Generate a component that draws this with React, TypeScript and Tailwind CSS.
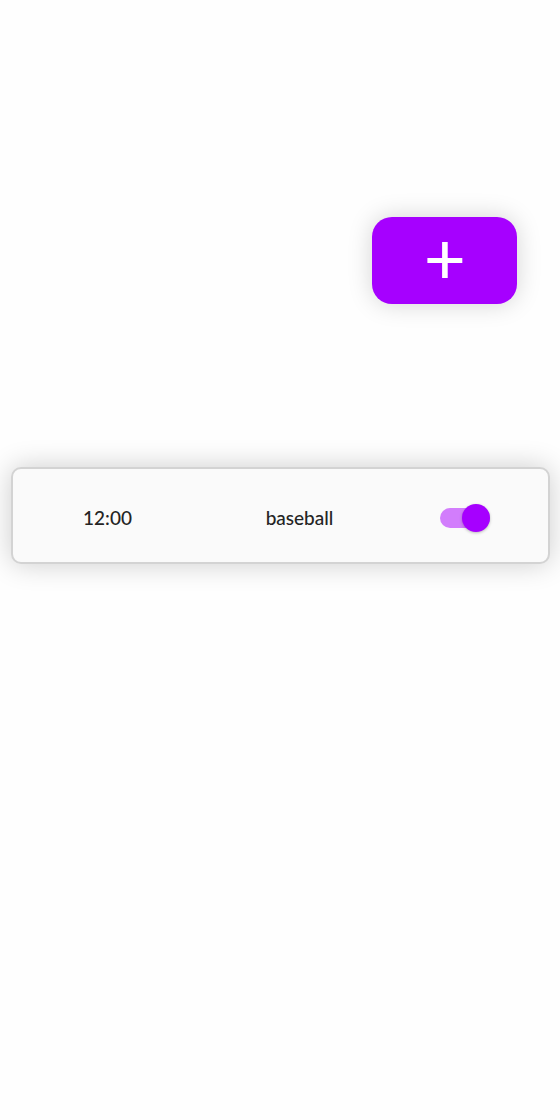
import { useState } from "react";

type Alarm = { id: string; time: string; name: string; enabled: boolean };

function AddButton() {
  return (
    <button
      type="button"
      aria-label="Add alarm"
      className="flex h-[87px] w-[145px] items-center justify-center rounded-[20px] bg-[#a600ff] pb-0.5 shadow-[0_0_24px_rgba(0,0,0,0.17)]"
    >
      <svg width="36" height="36" viewBox="0 0 36 36" fill="#ffffff" aria-hidden="true">
        <path d="M15.1 0h5.6v16h14.6v4.9H20.7V36h-5.6V20.9H.4V16h14.7z" />
      </svg>
    </button>
  );
}

function AlarmRow({ alarm, onToggle }: { alarm: Alarm; onToggle: () => void }) {
  return (
    <li className="grid grid-cols-[159fr_225fr_106fr] items-center rounded-[10px] border-2 border-[#d3d3d3] bg-[#fafafa] pt-[7px] pr-[30px] pb-[3px] pl-[15px] shadow-[0_0_28px_rgba(0,0,0,0.2)]">
      <time className="text-center">{alarm.time}</time>
      <label htmlFor={alarm.id} className="text-center">
        {alarm.name}
      </label>
      <div className="flex h-[83px] items-center justify-center">
        <span className="relative flex h-7 w-[50px] items-center">
          <input
            id={alarm.id}
            type="checkbox"
            role="switch"
            checked={alarm.enabled}
            onChange={onToggle}
            className="peer h-5 w-full cursor-pointer appearance-none rounded-full bg-gray-300 checked:bg-[#d27dfc]"
          />
          <span className="pointer-events-none absolute top-0 left-0 size-7 rounded-full bg-gray-100 shadow-[0_1px_3px_rgba(0,0,0,0.25)] transition-transform peer-checked:translate-x-[22px] peer-checked:bg-[#a600ff]" />
        </span>
      </div>
    </li>
  );
}

export default function App() {
  const [alarms, setAlarms] = useState<Alarm[]>([
    { id: "alarm-baseball", time: "12:00", name: "baseball", enabled: true },
  ]);

  const toggle = (id: string) =>
    setAlarms((items) =>
      items.map((item) => (item.id === id ? { ...item, enabled: !item.enabled } : item)),
    );

  return (
    <main className="min-h-screen bg-[#fefefe] pt-[217px] font-['Lato',sans-serif] text-[19px] leading-7 font-medium text-[#242424]">
      <div className="flex justify-end pr-[43px]">
        <AddButton />
      </div>
      <ul className="mt-[163px] mr-[10px] ml-[11px] flex flex-col gap-4">
        {alarms.map((alarm) => (
          <AlarmRow key={alarm.id} alarm={alarm} onToggle={() => toggle(alarm.id)} />
        ))}
      </ul>
    </main>
  );
}
